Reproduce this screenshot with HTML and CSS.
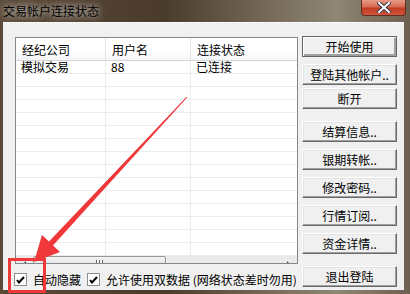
FILE: index.html
```html
<!DOCTYPE html>
<html lang="zh-CN">
<head>
  <meta charset="UTF-8" />
  <title>交易帐户连接状态</title>
  <link rel="stylesheet" href="styles.css">
</head>
<body>
  <div class="window">
    <!-- Title bar -->
    <div class="titlebar">
      <span class="title">交易帐户连接状态</span>
      <span class="close-btn">
        <svg width="14" height="11" viewBox="0 0 14 11">
          <path d="M2 1 L12 10 M12 1 L2 10" stroke="#3a3a52" stroke-width="4" stroke-linecap="square" />
          <path d="M2 1 L12 10 M12 1 L2 10" stroke="#fff" stroke-width="2" stroke-linecap="square" />
        </svg>
      </span>
    </div>

    <div class="client">
      <div class="left-col">
        <div class="listview">
          <table class="grid">
            <thead>
              <tr>
                <th class="col-broker">经纪公司</th>
                <th class="col-user">用户名</th>
                <th class="col-state">连接状态</th>
              </tr>
            </thead>
            <tbody>
              <tr><td>模拟交易</td><td class="num">88</td><td>已连接</td></tr>
              <tr><td></td><td></td><td></td></tr>
              <tr><td></td><td></td><td></td></tr>
              <tr><td></td><td></td><td></td></tr>
              <tr><td></td><td></td><td></td></tr>
              <tr><td></td><td></td><td></td></tr>
              <tr><td></td><td></td><td></td></tr>
              <tr><td></td><td></td><td></td></tr>
              <tr><td></td><td></td><td></td></tr>
              <tr><td></td><td></td><td></td></tr>
              <tr><td></td><td></td><td></td></tr>
              <tr><td></td><td></td><td></td></tr>
              <tr><td></td><td></td><td></td></tr>
              <tr><td></td><td></td><td></td></tr>
              <tr><td></td><td></td><td></td></tr>
            </tbody>
          </table>
          <div class="hscroll">
            <span class="arrow arrow-left"></span>
            <span class="thumb"><span class="grip"></span></span>
            <span class="arrow arrow-right"></span>
          </div>
        </div>

        <div class="options">
          <label class="check"><span class="box"><svg width="9" height="8" viewBox="0 0 9 8"><path d="M1 4 L3 6.5 L8 1" stroke="#000" stroke-width="2" fill="none" /></svg></span>自动隐藏</label>
          <label class="check"><span class="box"><svg width="9" height="8" viewBox="0 0 9 8"><path d="M1 4 L3 6.5 L8 1" stroke="#000" stroke-width="2" fill="none" /></svg></span>允许使用双数据 (网络状态差时勿用)</label>
        </div>
      </div>

      <div class="buttons">
        <button class="btn btn-default">开始使用</button>
        <button class="btn">登陆其他帐户..</button>
        <button class="btn tight">断开</button>
        <button class="btn group">结算信息..</button>
        <button class="btn">银期转帐..</button>
        <button class="btn">修改密码..</button>
        <button class="btn">行情订阅..</button>
        <button class="btn">资金详情..</button>
        <button class="btn group">退出登陆</button>
      </div>
    </div>
  </div>

  <!-- red annotation drawn over the dialog -->
  <svg class="annotation" width="410" height="294" viewBox="0 0 410 294">
    <polygon points="187.4,97.3 186.6,96.7 49,241.6 42,235 34,262 60,252 53,245.6" fill="#f0383a" />
    <rect x="9.5" y="259.5" width="35" height="32" fill="none" stroke="#f0383a" stroke-width="3" />
  </svg>
</body>
</html>
```

FILE: styles.css
```css
body {
  margin: 0;
  width: 410px;
  height: 294px;
  overflow: hidden;
  position: relative;
  font-family: "Noto Sans CJK SC", "Liberation Sans", sans-serif;
  font-size: 12px;
  color: #000;
  background: linear-gradient(90deg, #5b4a38 0%, #4a3b2c 40%, #7d7262 70%, #8f8676 82%, #6e6050 100%);
}

.window {
  display: flex;
  flex-direction: column;
  height: 294px;
}

.titlebar {
  height: 22px;
  display: flex;
  align-items: flex-start;
}

.title {
  padding: 2px 0 0 3px;
  line-height: 17px;
  font-size: 12px;
  text-shadow: 0 0 6px rgba(255, 255, 255, 0.7), 0 0 10px rgba(255, 255, 255, 0.5);
}

.close-btn {
  margin-left: auto;
  margin-right: 4px;
  width: 43px;
  height: 15px;
  border: 1px solid #5e2c22;
  border-top: none;
  border-radius: 0 0 4px 4px;
  background: linear-gradient(180deg, #e89a86 0%, #d86a52 45%, #c13b22 55%, #d2563a 100%);
  display: flex;
  align-items: center;
  justify-content: center;
}

.client {
  flex: 1;
  margin: 0 6px 4px 3px;
  background: #f0f0f0;
  border-top: 1px solid #fbfbfb;
  padding: 14px 7px 0 12px;
  display: flex;
  gap: 4px;
}

.left-col {
  width: 283px;
  display: flex;
  flex-direction: column;
}

.listview {
  height: 225px;
  border: 1px solid #828790;
  background: #fff;
  overflow: hidden;
  display: flex;
  flex-direction: column;
}

.grid {
  border-collapse: collapse;
  table-layout: fixed;
  width: 400px;
  flex: 1;
}

.grid th {
  height: 22px;
  padding: 0 0 0 6px;
  text-align: left;
  font-weight: normal;
  background: linear-gradient(180deg, #ffffff 0%, #ffffff 60%, #f4f5f7 100%);
  border-right: 1px solid #e3e5e8;
  border-bottom: 1px solid #d5d5d5;
}

.col-broker {
  width: 83px;
}

.col-user {
  width: 78px;
}

.grid td {
  height: 12px;
  padding: 0 0 0 5px;
  line-height: 12px;
  white-space: nowrap;
  border-right: 1px solid #ededed;
  border-bottom: 1px solid #ededed;
}

.grid td.num {
  padding-left: 5px;
}

.hscroll {
  height: 15px;
  margin-top: auto;
  display: flex;
  align-items: center;
  background: linear-gradient(180deg, #e8e8e8 0%, #f3f3f3 100%);
  position: relative;
}

.arrow {
  width: 17px;
  height: 15px;
  display: flex;
  align-items: center;
  justify-content: center;
}

.arrow::before {
  content: "";
  border-top: 3px solid transparent;
  border-bottom: 3px solid transparent;
}

.arrow-left::before {
  border-right: 3px solid #404040;
}

.arrow-right::before {
  border-left: 3px solid #404040;
}

.thumb {
  width: 131px;
  height: 13px;
  margin-left: 0;
  border: 1px solid #989898;
  border-radius: 2px;
  background: linear-gradient(180deg, #f4f4f4 0%, #e6e6e6 50%, #d6d6d6 51%, #e0e0e0 100%);
  display: flex;
  align-items: center;
  justify-content: center;
}

.grip {
  width: 7px;
  height: 7px;
  background: repeating-linear-gradient(90deg, #666 0 1px, #f8f8f8 1px 3px);
}

.arrow-right {
  margin-left: auto;
}

.options {
  margin-top: 9px;
  display: flex;
  gap: 7px;
  padding-left: 0;
}

.check {
  display: flex;
  align-items: center;
  gap: 6px;
  line-height: 13px;
  white-space: nowrap;
  margin-left: -1px;
}

.box {
  width: 11px;
  height: 11px;
  border: 1px solid #8e8f8f;
  background: #fff;
  display: flex;
  align-items: center;
  justify-content: center;
}

.buttons {
  width: 95px;
  margin-top: -1px;
  display: flex;
  flex-direction: column;
}

.btn {
  height: 21px;
  margin-top: 7px;
  padding: 0;
  font-family: inherit;
  font-size: 12px;
  color: #000;
  background: #f0f0f0;
  border: 1px solid;
  border-color: #fff #696969 #696969 #fff;
  box-shadow: inset -1px -1px #a0a0a0, inset 1px 1px #e3e3e3;
  line-height: 18px;
}

.btn-default {
  margin-top: 0;
  border-color: #646464;
  box-shadow: inset 1px 1px #fff, inset -2px -2px #a0a0a0;
}

.btn.tight {
  margin-top: 3px;
}

.btn.group {
  margin-top: 12px;
}

.annotation {
  position: absolute;
  top: 0;
  left: 0;
  pointer-events: none;
}
```
